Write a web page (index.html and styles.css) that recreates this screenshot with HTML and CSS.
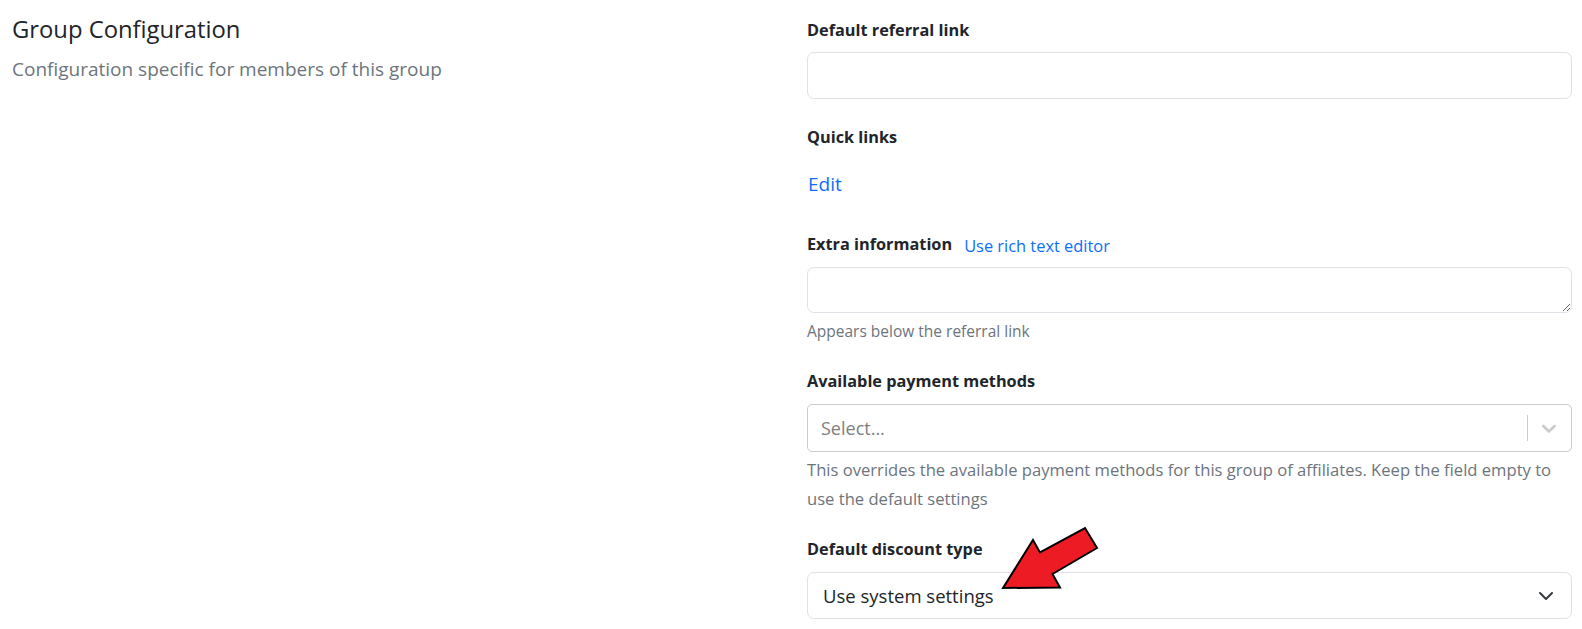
FILE: index.html
```html
<!DOCTYPE html>
<html lang="en">
<head>
<meta charset="utf-8">
<title>Group Configuration</title>
<link rel="stylesheet" href="styles.css">
</head>
<body>
<div class="page">
  <div class="intro">
    <h4 class="intro-title">Group Configuration</h4>
    <p class="intro-text">Configuration specific for members of this group</p>
  </div>
  <form class="fields">
    <div class="field field-first">
      <label class="field-label">Default referral link</label>
      <input class="text-input" type="text">
    </div>
    <div class="field">
      <label class="field-label">Quick links</label>
      <a class="edit-link" href="#">Edit</a>
    </div>
    <div class="field field-extra">
      <div class="label-row">
        <label class="field-label">Extra information</label>
        <a class="rich-link" href="#">Use rich text editor</a>
      </div>
      <textarea class="text-area" rows="1"></textarea>
      <div class="help">Appears below the referral link</div>
    </div>
    <div class="field field-payment">
      <label class="field-label">Available payment methods</label>
      <div class="multi-select">
        <span class="multi-placeholder">Select...</span>
        <span class="multi-sep"></span>
        <svg class="multi-chevron" width="24" height="24" viewBox="0 0 20 20"><path d="M4.516 7.548c0.436-0.446 1.043-0.481 1.576 0l3.908 3.747 3.908-3.747c0.533-0.481 1.141-0.446 1.574 0 0.436 0.445 0.408 1.197 0 1.615-0.406 0.418-4.695 4.502-4.695 4.502-0.217 0.223-0.502 0.335-0.787 0.335s-0.57-0.112-0.789-0.335c0 0-4.287-4.084-4.695-4.502s-0.436-1.170 0-1.615z" fill="#cccccc"/></svg>
      </div>
      <div class="help help-tall">This overrides the available payment methods for this group of affiliates. Keep the field empty to use the default settings</div>
    </div>
    <div class="field field-discount">
      <label class="field-label">Default discount type</label>
      <div class="plain-select">
        <span class="plain-value">Use system settings</span>
        <svg class="plain-chevron" width="16" height="16" viewBox="0 0 16 16"><path d="M2 5l6 6 6-6" fill="none" stroke="#343a40" stroke-width="2" stroke-linecap="round" stroke-linejoin="round"/></svg>
      </div>
    </div>
  </form>
  <svg class="callout-arrow" width="115" height="80" viewBox="0 0 115 80">
    <polygon points="13,73 43,25 50,37.5 95,13 107,33 62.5,59 70,72.5" fill="#ed1c24" stroke="#000" stroke-width="2" stroke-linejoin="miter"/>
  </svg>
</div>
</body>
</html>
```
FILE: styles.css
```css
* { box-sizing: border-box; }
html, body { margin: 0; padding: 0; background: #fff; }
body {
  font-family: "Open Sans", "Noto Sans", "Liberation Sans", sans-serif;
  color: #212529;
}
.page {
  position: relative;
  display: grid;
  grid-template-columns: 1fr 765px;
  padding: 0 10px 0 12px;
  height: 629px;
}
.intro { padding-top: 15px; }
.intro-title {
  margin: 0;
  font-size: 23.8px;
  font-weight: 400;
  line-height: 29px;
  color: #212529;
}
.intro-text {
  margin: 12px 0 0;
  font-size: 19px;
  line-height: 27px;
  color: #6c757d;
}
.fields { display: flex; flex-direction: column; padding-top: 18px; }
.field { display: flex; flex-direction: column; align-items: flex-start; }
.field-label {
  display: block;
  font-size: 16.3px;
  font-weight: 700;
  line-height: 24px;
  color: #212529;
}
.text-input {
  display: block;
  width: 100%;
  height: 47px;
  margin-top: 10px;
  border: 1px solid #dee2e6;
  border-radius: 7px;
  padding: 0 14px;
  font: inherit;
  background: #fff;
}
.field + .field { margin-top: 26px; }
.edit-link {
  margin-top: 23px;
  font-size: 19px;
  line-height: 24px;
  color: #0d6efd;
  text-decoration: none;
  padding-left: 1px;
}
.field-extra { margin-top: 36px !important; }
.label-row { display: flex; align-items: baseline; gap: 12px; }
.rich-link {
  font-size: 16.4px;
  line-height: 24px;
  color: #0d6efd;
  text-decoration: none;
  position: relative;
  top: 2px;
}
.text-area {
  display: block;
  width: 100%;
  height: 46px;
  margin-top: 11px;
  border: 1px solid #dee2e6;
  border-radius: 7px;
  padding: 8px 14px;
  font: inherit;
  resize: vertical;
  background: #fff;
}
.help {
  margin-top: 7px;
  font-size: 15.5px;
  line-height: 22px;
  color: #6c757d;
}
.field-payment { margin-top: 27px !important; }
.multi-select {
  display: flex;
  align-items: center;
  width: 100%;
  height: 48px;
  margin-top: 11px;
  border: 1px solid #cccccc;
  border-radius: 5px;
  padding: 0 10px 0 13px;
}
.multi-placeholder {
  flex: 1;
  font-size: 18px;
  color: #808080;
}
.multi-sep {
  width: 1px;
  height: 26px;
  background: #cccccc;
}
.multi-chevron { margin-left: 9px; }
.help-tall { margin-top: 4px; font-size: 16.6px; line-height: 28.5px; }
.field-discount { margin-top: 24px !important; }
.plain-select {
  display: flex;
  align-items: center;
  width: 100%;
  height: 47px;
  margin-top: 11px;
  border: 1px solid #dee2e6;
  border-radius: 7px;
  padding: 0 17px 0 15px;
}
.plain-value {
  flex: 1;
  font-size: 18.5px;
  color: #212529;
}
.callout-arrow {
  position: absolute;
  left: 990px;
  top: 515px;
}
```
